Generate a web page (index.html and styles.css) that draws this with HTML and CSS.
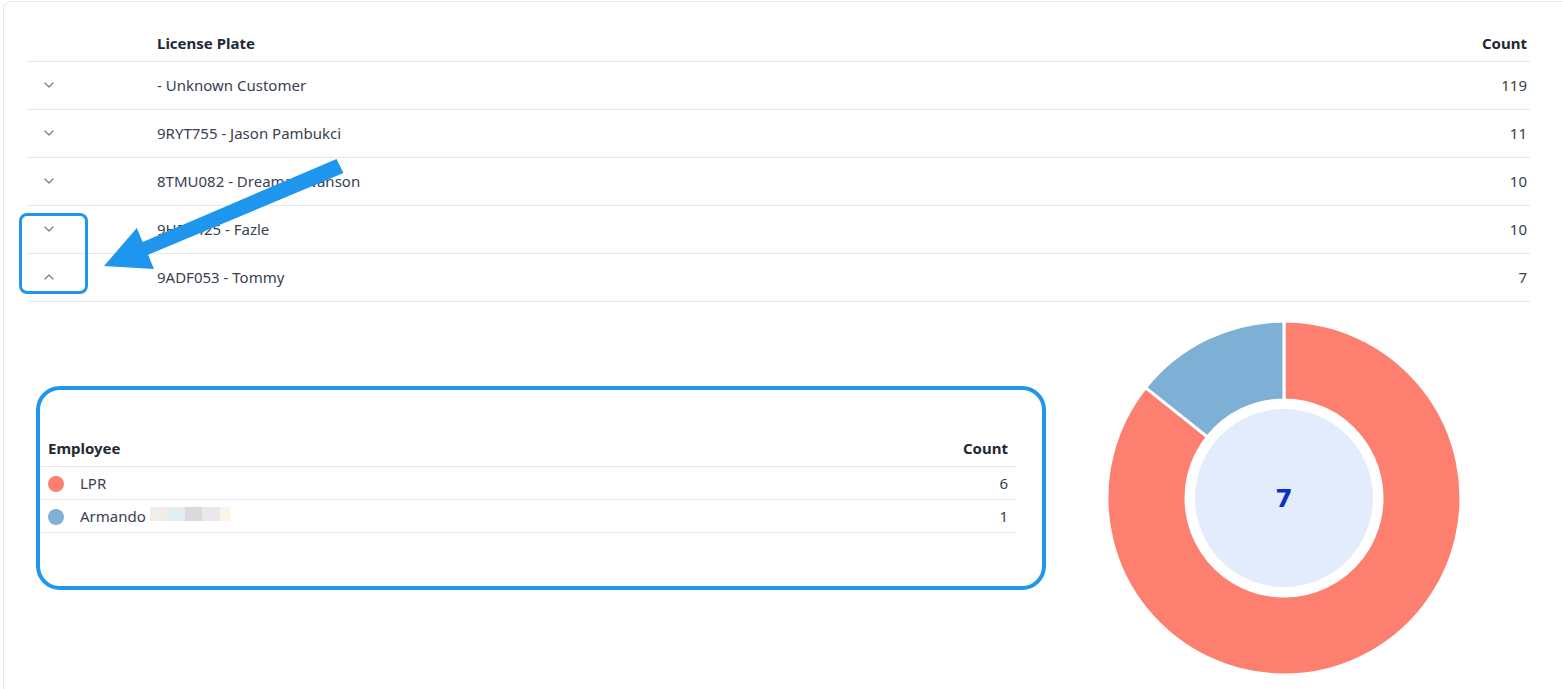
FILE: index.html
```html
<!DOCTYPE html>
<html lang="en">
<head>
<meta charset="utf-8">
<title>License Plates</title>
<link rel="stylesheet" href="styles.css">
</head>
<body>
<div class="page">
  <div class="panel">
    <table class="plates">
      <thead>
        <tr><th class="c-toggle"></th><th class="c-plate">License Plate</th><th class="c-count">Count</th></tr>
      </thead>
      <tbody>
        <tr><td class="c-toggle"><svg class="chev" viewBox="0 0 10 6"><path d="M1 1 L5 5 L9 1"/></svg></td><td>- Unknown Customer</td><td class="c-count">119</td></tr>
        <tr><td class="c-toggle"><svg class="chev" viewBox="0 0 10 6"><path d="M1 1 L5 5 L9 1"/></svg></td><td>9RYT755 - Jason Pambukci</td><td class="c-count">11</td></tr>
        <tr><td class="c-toggle"><svg class="chev" viewBox="0 0 10 6"><path d="M1 1 L5 5 L9 1"/></svg></td><td>8TMU082 - Dreama Swanson</td><td class="c-count">10</td></tr>
        <tr><td class="c-toggle"><svg class="chev" viewBox="0 0 10 6"><path d="M1 1 L5 5 L9 1"/></svg></td><td>9HRK425 - Fazle</td><td class="c-count">10</td></tr>
        <tr><td class="c-toggle"><svg class="chev" viewBox="0 0 10 6"><path d="M1 5 L5 1 L9 5"/></svg></td><td>9ADF053 - Tommy</td><td class="c-count">7</td></tr>
      </tbody>
    </table>

    <div class="detail">
      <div class="emp-card">
        <table class="emp">
          <thead>
            <tr><th class="e-name">Employee</th><th class="e-count">Count</th></tr>
          </thead>
          <tbody>
            <tr><td class="e-name"><span class="dot dot-red"></span>LPR</td><td class="e-count">6</td></tr>
            <tr><td class="e-name"><span class="dot dot-blue"></span>Armando<span class="redact"></span></td><td class="e-count">1</td></tr>
          </tbody>
        </table>
      </div>
      <div class="donut">
        <svg class="donut-svg" viewBox="0 0 356 356" width="356" height="356">
          <path class="seg-red" d="M178 1 A177 177 0 1 1 39.6 67.6 L101.4 116.9 A98 98 0 1 0 178 80 Z"/>
          <path class="seg-blue" d="M178 1 A177 177 0 0 0 39.6 67.6 L101.4 116.9 A98 98 0 0 1 178 80 Z"/>
          <circle class="hole" cx="178" cy="178" r="89"/>
          <text class="total" x="178" y="187" text-anchor="middle">7</text>
        </svg>
      </div>
    </div>
  </div>

  <svg class="annot-arrow" viewBox="0 0 1562 689" width="1562" height="689">
    <polygon points="336.5,159 343.5,173 148.1,254.8 154,269 104,266 136.8,228 142.7,242"/>
  </svg>
  <div class="annot-box"></div>
</div>
</body>
</html>
```

FILE: styles.css
```css
html, body {
  margin: 0;
  padding: 0;
  background: #ffffff;
  overflow: hidden;
}

body {
  font-family: "Noto Sans", "Open Sans", sans-serif;
  font-size: 15px;
  color: #374151;
}

.page {
  position: relative;
  width: 1562px;
  height: 689px;
  overflow: hidden;
}

.panel {
  margin: 1px -10px 0 3px;
  border: 1px solid #e5e7eb;
  border-radius: 8px;
  padding: 24px 41px 0 23px;
  height: 720px;
}

.plates {
  width: 100%;
  border-collapse: collapse;
}

.plates th {
  font-weight: 700;
  color: #1f2937;
  text-align: left;
  line-height: 20px;
  padding: 7px 0 8px;
  border-bottom: 1px solid #e5e7eb;
}

.plates td {
  line-height: 20px;
  padding: 13px 0 14px;
  border-bottom: 1px solid #e5e7eb;
}

.plates .c-toggle {
  width: 113px;
  padding-left: 17px;
}

.plates .c-count {
  text-align: right;
  padding-right: 3px;
}

.chev {
  display: block;
  width: 10px;
  height: 6px;
  fill: none;
  stroke: #7b8494;
  stroke-width: 1.4;
  stroke-linecap: round;
  stroke-linejoin: round;
}

.detail {
  display: flex;
  align-items: flex-start;
  gap: 60px;
  padding: 18px 0 0 9px;
}

.emp-card {
  margin-top: 66px;
  width: 1010px;
  box-sizing: border-box;
  border: 4px solid #1e96ee;
  border-radius: 24px;
  padding: 40px 26px 53px 1px;
}

.emp {
  width: 100%;
  border-collapse: collapse;
}

.emp th {
  font-weight: 700;
  color: #1f2937;
  line-height: 20px;
  padding: 8px 0;
  border-bottom: 1px solid #e5e7eb;
}

.emp td {
  line-height: 20px;
  height: 20px;
  padding: 6px 0;
  border-bottom: 1px solid #e5e7eb;
}

.emp .e-name {
  text-align: left;
  padding-left: 7px;
}

.emp .e-count {
  text-align: right;
  padding-right: 8px;
}

.dot {
  display: inline-block;
  width: 16px;
  height: 16px;
  border-radius: 50%;
  margin-right: 16px;
  vertical-align: -3px;
}

.dot-red { background: #fd7f6f; }
.dot-blue { background: #7eb0d5; }

.redact {
  display: inline-block;
  width: 80px;
  height: 14px;
  margin-left: 4px;
  vertical-align: 1px;
  background: linear-gradient(to right,
      #f1eeea 0 17px,
      #e2eef2 17px 35px,
      #dcd9dc 35px 52px,
      #ebe8ec 52px 70px,
      #fcf4e6 70px 80px);
}

.donut {
  width: 356px;
  height: 356px;
}

.donut-svg {
  display: block;
}

.seg-red {
  fill: #fd7f6f;
  stroke: #ffffff;
  stroke-width: 3;
  stroke-linejoin: round;
}

.seg-blue {
  fill: #7eb0d5;
  stroke: #ffffff;
  stroke-width: 3;
  stroke-linejoin: round;
}

.hole {
  fill: #e3ecfc;
}

.total {
  font-family: "DejaVu Sans", sans-serif;
  font-weight: 700;
  font-size: 25px;
  fill: #0b30c4;
}

.annot-arrow {
  position: absolute;
  left: 0;
  top: 0;
  pointer-events: none;
}

.annot-arrow polygon {
  fill: #1e96ee;
}

.annot-box {
  position: absolute;
  left: 19px;
  top: 213px;
  width: 69px;
  height: 81px;
  box-sizing: border-box;
  border: 3px solid #1e96ee;
  border-radius: 8px;
  pointer-events: none;
}
```
